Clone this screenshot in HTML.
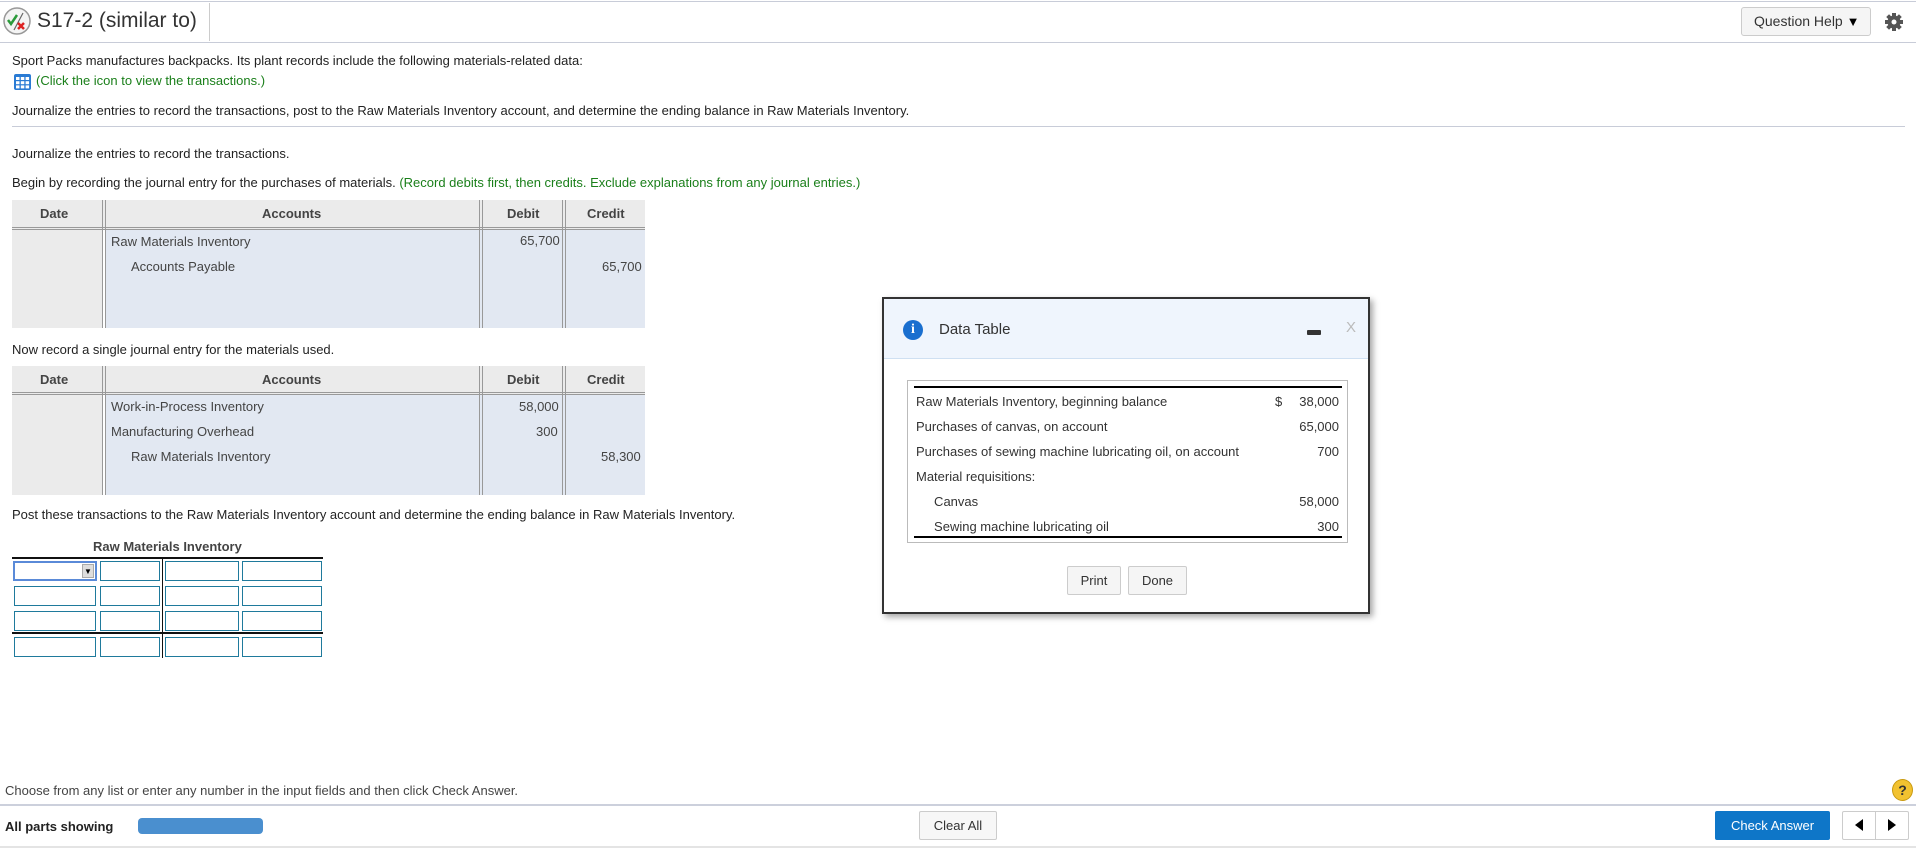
<!DOCTYPE html>
<html><head><meta charset="utf-8"><style>
*{margin:0;padding:0;box-sizing:border-box}
body{width:1916px;height:848px;position:relative;overflow:hidden;background:#fff;font-family:"Liberation Sans",Arial,sans-serif;font-size:13px;color:#222}
.a{position:absolute;white-space:nowrap}
.g{color:#1a7f1a}
.hl{position:absolute;height:1px;background:#c8ccd8}
.tb{position:absolute;background:#e2e8f2}
.th{position:absolute;background:#ebebeb;color:#444;font-weight:bold;text-align:center;line-height:27px;border-bottom:3px double #999}
.vl{position:absolute;width:4px;border-left:1px solid #999;border-right:1px solid #999}
.in{position:absolute;height:20px;border:1px solid #1f7a9c;background:#fff}
</style></head><body>
<div class="hl" style="left:0;top:1px;width:1916px"></div>
<div class="hl" style="left:0;top:42px;width:1916px"></div>
<svg class="a" style="left:2px;top:6px" width="30" height="30" viewBox="0 0 30 30"><circle cx="15" cy="15" r="13" fill="#f4f4f4" stroke="#999" stroke-width="1.5"/><path d="M6 14l3 4 6-9" stroke="#2a9a3a" stroke-width="2.5" fill="none"/><path d="M12 24L21 7" stroke="#666" stroke-width="1.2"/><path d="M16 17l6 6M22 17l-6 6" stroke="#d22" stroke-width="2.5"/></svg>
<div class="a" style="left:37px;top:9px;font-size:21px;color:#333">S17-2 (similar to)</div>
<div class="a" style="left:209px;top:3px;width:1px;height:38px;background:#ccc"></div>
<div class="a" style="left:1741px;top:7px;width:130px;height:29px;border:1px solid #ccc;border-radius:3px;background:#f5f5f5;font-size:14px;color:#333;line-height:27px;padding-left:12px">Question Help <span style="font-size:13px;color:#000">▼</span></div>
<svg class="a" style="left:1884px;top:12px" width="20" height="20" viewBox="0 0 20 20"><g fill="#555"><circle cx="10" cy="10" r="6.5"/><g id="t"><rect x="8" y="1" width="4" height="18"/><rect x="1" y="8" width="18" height="4"/></g><use href="#t" transform="rotate(45 10 10)"/></g><circle cx="10" cy="10" r="2.5" fill="#fff"/></svg>

<div class="a" style="left:12px;top:53px">Sport Packs manufactures backpacks. Its plant records include the following materials-related data:</div>
<svg class="a" style="left:14px;top:74px" width="17" height="16" viewBox="0 0 17 16"><rect width="17" height="16" rx="2" fill="#2a7bd4"/><g fill="#fff"><rect x="2" y="3" width="3.5" height="3"/><rect x="6.8" y="3" width="3.5" height="3"/><rect x="11.6" y="3" width="3.5" height="3"/><rect x="2" y="7.2" width="3.5" height="3"/><rect x="6.8" y="7.2" width="3.5" height="3"/><rect x="11.6" y="7.2" width="3.5" height="3"/><rect x="2" y="11.4" width="3.5" height="3"/><rect x="6.8" y="11.4" width="3.5" height="3"/><rect x="11.6" y="11.4" width="3.5" height="3"/></g></svg>
<div class="a g" style="left:36px;top:73px">(Click the icon to view the transactions.)</div>
<div class="a" style="left:12px;top:103px">Journalize the entries to record the transactions, post to the Raw Materials Inventory account, and determine the ending balance in Raw Materials Inventory.</div>
<div class="hl" style="left:12px;top:126px;width:1893px"></div>
<div class="a" style="left:12px;top:146px">Journalize the entries to record the transactions.</div>
<div class="a" style="left:12px;top:175px">Begin by recording the journal entry for the purchases of materials. <span class="g">(Record debits first, then credits. Exclude explanations from any journal entries.)</span></div>

<div class="th" style="left:12px;top:200px;width:633px;height:30px"></div>
<div class="a" style="left:12px;top:230px;width:91px;height:98px;background:#ebebeb"></div>
<div class="tb" style="left:105px;top:230px;width:540px;height:98px"></div>
<div class="vl" style="left:102px;top:200px;height:128px"></div>
<div class="vl" style="left:479px;top:200px;height:128px"></div>
<div class="vl" style="left:562px;top:200px;height:128px"></div>
<div class="a" style="left:40px;top:206px;font-weight:bold;color:#444">Date</div>
<div class="a" style="left:262px;top:206px;font-weight:bold;color:#444">Accounts</div>
<div class="a" style="left:507px;top:206px;font-weight:bold;color:#444">Debit</div>
<div class="a" style="left:587px;top:206px;font-weight:bold;color:#444">Credit</div>
<div class="a" style="left:111px;top:234px;color:#444">Raw Materials Inventory</div>
<div class="a" style="left:131px;top:259px;color:#444">Accounts Payable</div>
<div class="a" style="left:520px;top:233px;color:#444">65,700</div>
<div class="a" style="left:602px;top:259px;color:#444">65,700</div>

<div class="a" style="left:12px;top:342px">Now record a single journal entry for the materials used.</div>
<div class="th" style="left:12px;top:366px;width:633px;height:29px;line-height:26px"></div>
<div class="a" style="left:12px;top:395px;width:91px;height:100px;background:#ebebeb"></div>
<div class="tb" style="left:105px;top:395px;width:540px;height:100px"></div>
<div class="vl" style="left:102px;top:366px;height:129px"></div>
<div class="vl" style="left:479px;top:366px;height:129px"></div>
<div class="vl" style="left:562px;top:366px;height:129px"></div>
<div class="a" style="left:40px;top:372px;font-weight:bold;color:#444">Date</div>
<div class="a" style="left:262px;top:372px;font-weight:bold;color:#444">Accounts</div>
<div class="a" style="left:507px;top:372px;font-weight:bold;color:#444">Debit</div>
<div class="a" style="left:587px;top:372px;font-weight:bold;color:#444">Credit</div>
<div class="a" style="left:111px;top:399px;color:#444">Work-in-Process Inventory</div>
<div class="a" style="left:111px;top:424px;color:#444">Manufacturing Overhead</div>
<div class="a" style="left:131px;top:449px;color:#444">Raw Materials Inventory</div>
<div class="a" style="left:519px;top:399px;color:#444">58,000</div>
<div class="a" style="left:536px;top:424px;color:#444">300</div>
<div class="a" style="left:601px;top:449px;color:#444">58,300</div>

<div class="a" style="left:12px;top:507px">Post these transactions to the Raw Materials Inventory account and determine the ending balance in Raw Materials Inventory.</div>
<div class="a" style="left:93px;top:539px;font-weight:bold;color:#444">Raw Materials Inventory</div>
<div class="a" style="left:12px;top:557px;width:311px;height:2px;background:#111"></div>
<div class="a" style="left:12px;top:632px;width:311px;height:2px;background:#111"></div>
<div class="a" style="left:162px;top:557px;width:1px;height:101px;background:#111"></div>
<div class="in" style="left:13px;top:561px;width:84px;border:2px solid #5a8ad8"><div style="position:absolute;right:1px;top:1px;width:12px;height:14px;background:#ddd;border:1px solid #aaa;font-size:8px;line-height:13px;text-align:center;color:#000">▼</div></div>
<div class="in" style="left:100px;top:561px;width:60px"></div><div class="in" style="left:165px;top:561px;width:74px"></div><div class="in" style="left:242px;top:561px;width:80px"></div>
<div class="in" style="left:14px;top:586px;width:82px"></div><div class="in" style="left:100px;top:586px;width:60px"></div><div class="in" style="left:165px;top:586px;width:74px"></div><div class="in" style="left:242px;top:586px;width:80px"></div>
<div class="in" style="left:14px;top:611px;width:82px"></div><div class="in" style="left:100px;top:611px;width:60px"></div><div class="in" style="left:165px;top:611px;width:74px"></div><div class="in" style="left:242px;top:611px;width:80px"></div>
<div class="in" style="left:14px;top:637px;width:82px"></div><div class="in" style="left:100px;top:637px;width:60px"></div><div class="in" style="left:165px;top:637px;width:74px"></div><div class="in" style="left:242px;top:637px;width:80px"></div>

<div class="a" style="left:882px;top:297px;width:488px;height:317px;border:2px solid #333;background:#fff;box-shadow:3px 3px 6px rgba(0,0,0,.35)">
 <div style="position:absolute;left:0;top:0;width:484px;height:60px;background:#eff5fd;border-bottom:1px solid #cfe0f2"></div>
 <div style="position:absolute;left:19px;top:21px;width:20px;height:20px;border-radius:50%;background:#1a6fcf;color:#fff;font:bold 14px 'Liberation Serif',serif;text-align:center;line-height:20px">i</div>
 <div style="position:absolute;left:55px;top:22px;font-size:15px;color:#333">Data Table</div>
 <div style="position:absolute;left:423px;top:31px;width:14px;height:5px;background:#333;border-radius:1px"></div>
 <div style="position:absolute;left:462px;top:20px;font-size:15px;color:#bbb">X</div>
 <div style="position:absolute;left:23px;top:81px;width:441px;height:163px;border:1px solid #bbb"></div>
 <div style="position:absolute;left:30px;top:87px;width:428px;height:2px;background:#000"></div>
 <div style="position:absolute;left:30px;top:237px;width:428px;height:2px;background:#000"></div>
 <div style="position:absolute;left:32px;top:90px;color:#333;line-height:25px;font-size:13px">Raw Materials Inventory, beginning balance<br>Purchases of canvas, on account<br>Purchases of sewing machine lubricating oil, on account<br>Material requisitions:<br>&nbsp;&nbsp;&nbsp;&nbsp;&nbsp;Canvas<br>&nbsp;&nbsp;&nbsp;&nbsp;&nbsp;Sewing machine lubricating oil</div>
 <div style="position:absolute;left:391px;top:90px;color:#333;line-height:25px">$</div>
 <div style="position:absolute;right:29px;top:90px;color:#333;line-height:25px;text-align:right">38,000<br>65,000<br>700<br><br>58,000<br>300</div>
 <div style="position:absolute;left:183px;top:267px;width:54px;height:29px;border:1px solid #ccc;border-radius:2px;background:#f5f5f5;text-align:center;line-height:27px;color:#333">Print</div>
 <div style="position:absolute;left:244px;top:267px;width:59px;height:29px;border:1px solid #ccc;border-radius:2px;background:#f5f5f5;text-align:center;line-height:27px;color:#333">Done</div>
</div>

<div class="a" style="left:5px;top:783px;color:#444">Choose from any list or enter any number in the input fields and then click Check Answer.</div>
<div class="a" style="left:1892px;top:779px;width:21px;height:22px;border-radius:50%;background:#f2c230;border:1px solid #c99a10;text-align:center;font:bold 14px/20px 'Liberation Sans',sans-serif;color:#333">?</div>
<div class="a" style="left:0;top:804px;width:1916px;height:2px;background:#ccd0dc"></div>
<div class="a" style="left:5px;top:819px;font-weight:bold;color:#222">All parts showing</div>
<div class="a" style="left:138px;top:818px;width:125px;height:16px;border-radius:4px;background:#4a8fcf"></div>
<div class="a" style="left:919px;top:811px;width:78px;height:29px;border:1px solid #ccc;border-radius:2px;background:#f7f7f7;text-align:center;line-height:27px;color:#333">Clear All</div>
<div class="a" style="left:1715px;top:811px;width:115px;height:29px;border-radius:2px;background:#0e76c8;text-align:center;line-height:29px;color:#fff">Check Answer</div>
<div class="a" style="left:1842px;top:811px;width:67px;height:29px;border:1px solid #ccc;border-radius:2px;background:#fff"></div>
<div class="a" style="left:1875px;top:811px;width:1px;height:29px;background:#ccc"></div>
<svg class="a" style="left:1853px;top:818px" width="12" height="14"><path d="M10 1L2 7l8 6z" fill="#000"/></svg>
<svg class="a" style="left:1886px;top:818px" width="12" height="14"><path d="M2 1l8 6-8 6z" fill="#000"/></svg>
<div class="a" style="left:0;top:846px;width:1916px;height:2px;background:#e4e4e4"></div>
</body></html>
